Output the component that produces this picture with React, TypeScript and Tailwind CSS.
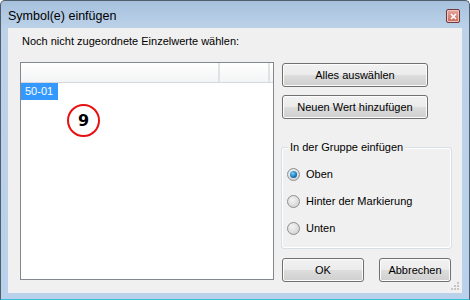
import { ReactNode } from 'react';

const btn =
  'flex items-center justify-center rounded-[3px] border border-[#707070] bg-[linear-gradient(#f2f2f2_0%,#ebebeb_50%,#dddddd_51%,#cfcfcf_100%)] shadow-[inset_0_0_0_1px_#fcfcfc] text-[11px] text-black';

function Radio({ checked, children }: { checked?: boolean; children: ReactNode }) {
  return (
    <div className="flex items-center h-[14px]">
      <div className="w-[13px] h-[13px] rounded-full border border-[#8e8f8f] bg-[radial-gradient(circle_at_40%_35%,#f4f4f4_0%,#dcdcdc_60%,#c4c4c4_100%)] flex items-center justify-center">
        {checked && (
          <div className="w-[7px] h-[7px] rounded-full bg-[radial-gradient(circle_at_40%_35%,#7ed0f5_0%,#1b7cc0_55%,#0b3f6b_100%)]" />
        )}
      </div>
      <span className="ml-[6px] text-[11px] text-black">{children}</span>
    </div>
  );
}

export default function App() {
  return (
    <div className="w-[470px] h-[300px] flex flex-col border border-[#4f5d6d] border-b-[#36c0d8] rounded-t-[5px] bg-[linear-gradient(#a7c1dd_0px,#bcd2e9_28px,#b9d1ea_100%)] font-['Liberation_Sans',Arial,sans-serif] overflow-hidden">
      {/* Title bar */}
      <div className="h-[27px] flex items-center justify-between pl-[7px] pr-[9px]">
        <span className="text-[12.5px] text-black pt-[3px]">Symbol(e) einfügen</span>
        <div className="w-[14px] h-[14px] mt-[3px] rounded-[2px] border border-[#6d3a3a] bg-[linear-gradient(#e8a8a0,#c8685e)] shadow-[inset_0_0_0_1px_#f3c4bd] flex items-center justify-center">
          <svg width="7" height="7" viewBox="0 0 7 7">
            <path d="M1 1 L6 6 M6 1 L1 6" stroke="#ffffff" strokeWidth="1.6" />
          </svg>
        </div>
      </div>

      {/* Client area */}
      <div className="relative mx-[7px] mb-[6px] flex-1 bg-[#f0f0f0] flex flex-col">
        <div className="h-[34px] pl-[14px] pt-[6px] text-[11px] leading-[14px] text-black">
          Noch nicht zugeordnete Einzelwerte wählen:
        </div>

        <div className="flex pl-[12px]">
          {/* List view */}
          <div className="relative w-[254px] h-[218px] border border-[#828790] bg-white">
            <div className="flex h-[20px] border-b border-[#d5d9de] bg-[linear-gradient(#ffffff,#f3f4f5)]">
              <div className="w-[199px] border-r-2 border-[#dfe3e6]" />
              <div className="w-[50px] border-r-2 border-[#dfe3e6]" />
            </div>
            <div className="w-[37px] h-[17px] bg-[#3399ff] text-white text-[11px] leading-[17px] pl-[4px]">50-01</div>
            <div className="absolute left-[46px] top-[41px] w-[33px] h-[33px] rounded-full border-2 border-[#e81010] bg-white flex items-center justify-center">
              <span className="font-['DejaVu_Sans',sans-serif] font-bold text-[16px] text-black leading-none">9</span>
            </div>
          </div>

          {/* Right column */}
          <div className="ml-[8px] w-[171px] flex flex-col">
            <button className={`${btn} w-[146px] h-[24px] mt-[1px]`}>Alles auswählen</button>
            <button className={`${btn} w-[146px] h-[24px] mt-[8px]`}>Neuen Wert hinzufügen</button>

            <div className="relative mt-[28px] w-[171px] h-[102px] rounded-[3px] border border-[#d5dfe5] shadow-[inset_0_0_0_1px_#ffffff] -ml-[1px]">
              <span className="absolute -top-[8px] left-[6px] px-[2px] bg-[#f0f0f0] text-[11px] text-black leading-[14px]">
                In der Gruppe einfügen
              </span>
              <div className="flex flex-col gap-[13px] pl-[5px] pt-[19px]">
                <Radio checked>Oben</Radio>
                <Radio>Hinter der Markierung</Radio>
                <Radio>Unten</Radio>
              </div>
            </div>

            <div className="flex mt-[9px]">
              <button className={`${btn} w-[82px] h-[24px]`}>OK</button>
              <button className={`${btn} w-[72px] h-[24px] ml-[15px]`}>Abbrechen</button>
            </div>
          </div>
        </div>

        {/* size grip */}
        <svg className="absolute right-[2px] bottom-[2px]" width="10" height="10" viewBox="0 0 10 10">
          {[
            [7, 1],
            [4, 4],
            [7, 4],
            [1, 7],
            [4, 7],
            [7, 7],
          ].map(([x, y]) => (
            <rect key={`${x}-${y}`} x={x} y={y} width="2" height="2" fill="#c5c5c5" />
          ))}
        </svg>
      </div>
    </div>
  );
}
